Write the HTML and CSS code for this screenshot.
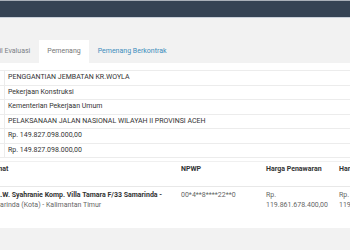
FILE: index.html
```html
<!DOCTYPE html>
<html>
<head>
    <meta charset="utf-8">
    <title>Pemenang</title>
    <link rel="stylesheet" href="styles.css">
</head>
<body>
    <div class="topbar"></div>
    <ul class="tabs">
        <li class="tab">Hasil Evaluasi</li>
        <li class="tab active">Pemenang</li>
        <li class="tab link">Pemenang Berkontrak</li>
    </ul>
    <div class="panel">
        <table class="info">
            <tr><th>Nama Tender</th><td>PENGGANTIAN JEMBATAN KR.WOYLA</td></tr>
            <tr><th>Kategori</th><td>Pekerjaan Konstruksi</td></tr>
            <tr><th>Instansi</th><td>Kementerian Pekerjaan Umum</td></tr>
            <tr><th>Satker</th><td>PELAKSANAAN JALAN NASIONAL WILAYAH II PROVINSI ACEH</td></tr>
            <tr><th>Pagu</th><td>Rp. 149.827.098.000,00</td></tr>
            <tr><th>HPS</th><td>Rp. 149.827.098.000,00</td></tr>
        </table>
        <table class="winners">
            <colgroup>
                <col class="col-address">
                <col class="col-npwp">
                <col class="col-offer">
                <col class="col-fixed">
            </colgroup>
            <tr>
                <th>Alamat</th>
                <th>NPWP</th>
                <th>Harga Penawaran</th>
                <th>Harga Terkoreksi</th>
            </tr>
            <tr>
                <td><strong>Jl. A.W. Syahranie Komp. Villa Tamara F/33 Samarinda -</strong> Samarinda (Kota) - Kalimantan Timur</td>
                <td>00*4**8****22**0</td>
                <td>Rp. 119.861.678.400,00</td>
                <td>Rp. 119.861.678.400,00</td>
            </tr>
        </table>
    </div>
</body>
</html>
```

FILE: styles.css
```css
body {
    margin: 0;
    font-family: Roboto, "Liberation Sans", sans-serif;
    font-size: 7px;
    color: #333;
    background-color: #f2f2f2;
    overflow: hidden;
}
.topbar {
    height: 16px;
    background-color: #354354;
    border-top: 1px solid #a9b0b9;
    border-bottom: 1px solid #c8cfd9;
}
.tabs {
    display: flex;
    list-style: none;
    margin: 22px 0 0 -21px;
    padding: 0;
}
.tab {
    padding: 0 8px;
    line-height: 23px;
    margin-right: 1px;
    color: #7a7f85;
    white-space: nowrap;
}
.tab.active {
    background-color: #fff;
    color: #777;
}
.tab.link {
    color: #3c8dbc;
}
.panel {
    background-color: #fff;
    height: 158px;
    padding-top: 7px;
}
.info {
    border-collapse: collapse;
    margin-left: -96px;
    width: 600px;
}
.info th,
.info td {
    border: 1px solid #ececec;
    padding: 2px 3px;
    line-height: 9.5px;
    text-align: left;
    font-weight: normal;
}
.info th {
    width: 93px;
}
.winners {
    border-collapse: collapse;
    table-layout: fixed;
    width: 433px;
    margin: 3px 0 0 -20px;
    border-top: 1px solid #f0f0f0;
}
.col-address { width: 195px; }
.col-npwp { width: 85px; }
.col-offer { width: 73px; }
.col-fixed { width: 80px; }
.winners th {
    height: 22px;
    padding: 2px 6px 0;
    line-height: 10px;
    vertical-align: top;
    text-align: left;
    font-weight: bold;
    color: #333;
    border-bottom: 1px solid #e8e8e8;
}
.winners td {
    padding: 3px 6px;
    line-height: 10px;
    vertical-align: top;
    color: #666;
}
.winners td strong {
    color: #333;
}
```
